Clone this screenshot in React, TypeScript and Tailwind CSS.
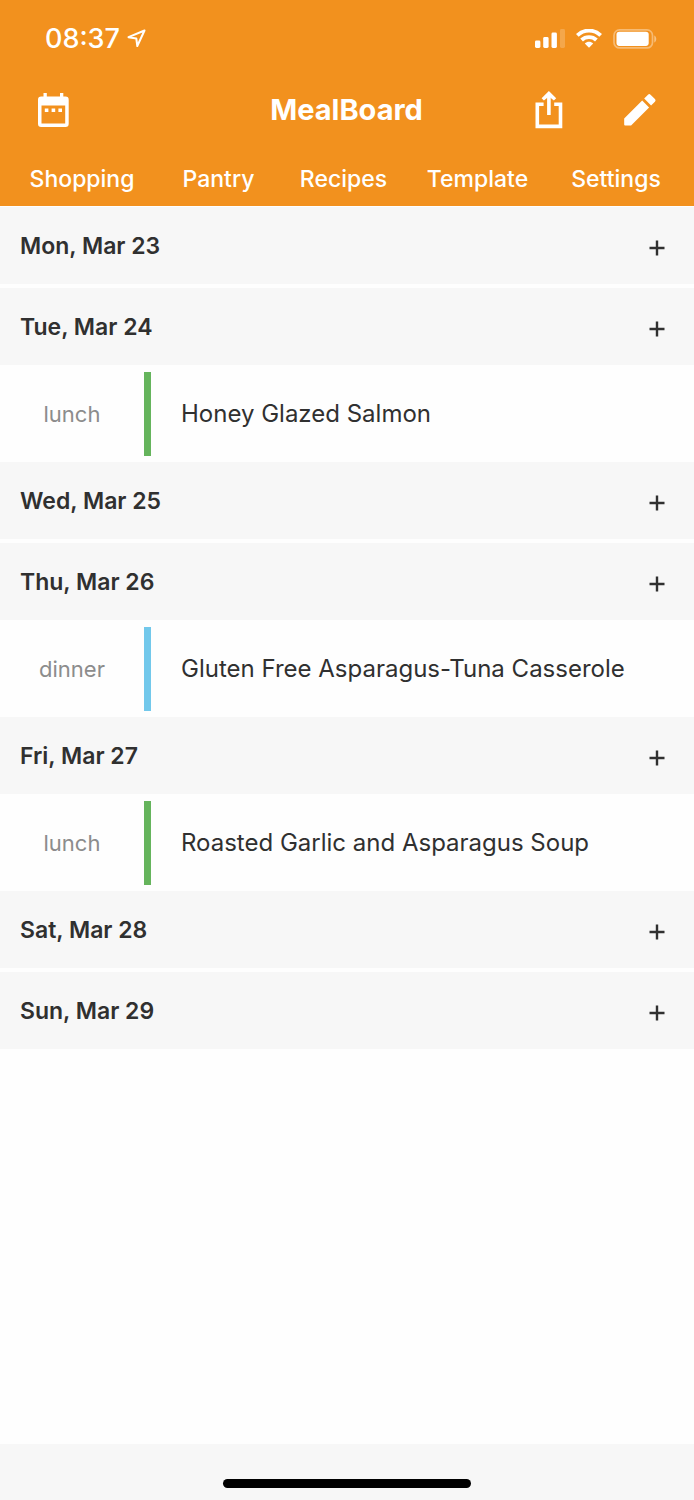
type Meal = { slot: 'lunch' | 'dinner'; name: string };
type Day = { label: string; meals: Meal[] };

const days: Day[] = [
  { label: 'Mon, Mar 23', meals: [] },
  { label: 'Tue, Mar 24', meals: [{ slot: 'lunch', name: 'Honey Glazed Salmon' }] },
  { label: 'Wed, Mar 25', meals: [] },
  { label: 'Thu, Mar 26', meals: [{ slot: 'dinner', name: 'Gluten Free Asparagus-Tuna Casserole' }] },
  { label: 'Fri, Mar 27', meals: [{ slot: 'lunch', name: 'Roasted Garlic and Asparagus Soup' }] },
  { label: 'Sat, Mar 28', meals: [] },
  { label: 'Sun, Mar 29', meals: [] },
];

const tabs = ['Shopping', 'Pantry', 'Recipes', 'Template', 'Settings'];

const slotColor = { lunch: 'bg-[#65b45c]', dinner: 'bg-[#72c8eb]' };

function StatusBar() {
  return (
    <div className="flex h-[75px] items-center justify-between pt-[2px] pr-[37px] pl-[45px]">
      <div className="flex items-center gap-[7px]">
        <span className="text-[27px] leading-8 font-medium">08:37</span>
        <svg className="h-5 w-5" viewBox="0 0 20 20" fill="none" stroke="currentColor" strokeWidth="2" strokeLinejoin="round" aria-hidden="true">
          <path d="M17.500 1.500 1.500 8.200 9.300 9.500 10.300 17Z" />
        </svg>
      </div>
      <div className="flex items-center gap-[11px]">
        <svg className="h-5 w-[30px]" viewBox="0 0 30 20" fill="currentColor" aria-hidden="true">
          <rect x="0" y="11.5" width="5.4" height="7.5" rx="1.4" />
          <rect x="8.2" y="8" width="5.4" height="11" rx="1.4" />
          <rect x="16.5" y="3.5" width="5.4" height="15.5" rx="1.4" />
          <rect x="25" y="0" width="5" height="19" rx="1.4" opacity="0.2" />
        </svg>
        <svg className="h-5 w-[26px]" viewBox="0 0 26 20" fill="none" stroke="currentColor" strokeWidth="3.9" aria-hidden="true">
          <path d="M1.300 6.400C7.800 0 18.200 0 24.700 6.400" />
          <path d="M5.600 11C9.700 7.100 16.300 7.100 20.400 11" />
          <path d="M8.800 14.500C11.200 12.200 14.800 12.200 17.200 14.500L13 18.700Z" fill="currentColor" stroke="none" />
        </svg>
        <svg className="h-5 w-11" viewBox="0 0 44 20" aria-hidden="true">
          <rect x="1" y="0.9" width="38.5" height="18" rx="5.5" fill="none" stroke="currentColor" strokeWidth="1.7" opacity="0.38" />
          <rect x="3.5" y="2.7" width="32.2" height="14.2" rx="2.8" fill="currentColor" />
          <path d="M41.300 6.400v7c2.600-1.200 2.600-5.800 0-7Z" fill="currentColor" opacity="0.45" />
        </svg>
      </div>
    </div>
  );
}

function TitleBar() {
  return (
    <div className="grid h-[70px] grid-cols-[1fr_auto_1fr] items-center pr-[38px] pl-[37px]">
      <button type="button" aria-label="Calendar" className="justify-self-start">
        <svg className="h-[34px] w-8" viewBox="0 0 32 34" fill="currentColor" aria-hidden="true">
          <path
            fillRule="evenodd"
            d="M6.500 0h3.300v3.600h13.200V0h3.300v3.600h2.200A3.200 3.200 0 0 1 31.700 6.800v24A3.200 3.200 0 0 1 28.500 34H4.200A3.200 3.200 0 0 1 1 30.800v-24A3.200 3.200 0 0 1 4.200 3.600H6.500ZM4.500 12.400v18.100h23.700V12.400Z"
          />
          <path d="M7.800 15.500h3.600v3.600H7.800zM14.600 15.500h3.600v3.600h-3.600zM21.400 15.500h3.600v3.600h-3.600z" />
        </svg>
      </button>
      <h1 className="text-[29px] leading-9 font-bold">MealBoard</h1>
      <div className="flex items-center gap-[57px] justify-self-end">
        <button type="button" aria-label="Share">
          <svg className="h-[38px] w-7" viewBox="0 0 28 38" fill="none" stroke="currentColor" strokeWidth="3.6" aria-hidden="true">
            <path d="M8.600 13.200H2.300v22.200h23.200V13.200h-6.300" />
            <path d="M13.900 24V4" />
            <path d="M13.900 0 21.200 7.300 18.900 9.600 13.900 5.600 8.900 9.600 6.600 7.300Z" fill="currentColor" stroke="none" />
          </svg>
        </button>
        <button type="button" aria-label="Edit">
          <svg className="h-10 w-9" viewBox="2.2 2 19.8 22" fill="currentColor" aria-hidden="true">
            <path d="M4.500 17.700V21q0 .5.500.5h3.300L18.200 11.600 14.400 7.800ZM21.400 8.400a1 1 0 0 0 0-1.400L19 4.600a1 1 0 0 0-1.400 0L15.500 6.700l3.800 3.800Z" />
          </svg>
        </button>
      </div>
    </div>
  );
}

function DaySection({ day }: { day: Day }) {
  return (
    <section>
      <div className="flex h-[77px] items-center justify-between bg-[#f7f7f7] pr-[29px] pl-5">
        <h2 className="text-[23px] leading-8 font-semibold">{day.label}</h2>
        <button type="button" aria-label={`Add meal on ${day.label}`} className="pt-1">
          <svg className="h-4 w-4" viewBox="0 0 16 16" stroke="currentColor" strokeWidth="2.4" aria-hidden="true">
            <path d="M8 .5v15M.5 8h15" />
          </svg>
        </button>
      </div>
      {day.meals.map((meal) => (
        <div key={meal.name} className="flex h-[97px] items-center">
          <span className="w-36 shrink-0 text-center text-[22px] leading-8 text-[#8c8c8c]">{meal.slot}</span>
          <span className={`h-[84px] w-[7px] shrink-0 ${slotColor[meal.slot]}`} />
          <a href="#meal" className="pl-[30px] text-[24px] leading-8">{meal.name}</a>
        </div>
      ))}
    </section>
  );
}

export default function App() {
  return (
    <div className="flex min-h-screen flex-col bg-[#fefefe] font-['Inter',sans-serif] text-[#303030]">
      <header className="bg-[#f2911e] text-white">
        <StatusBar />
        <TitleBar />
        <nav className="grid h-[61px] grid-cols-[154fr_119fr_131fr_137fr_140fr] items-start pt-[18px] pr-2 pl-[5px] text-center text-[23px] leading-8 font-medium">
          {tabs.map((tab) => (
            <a key={tab} href={`#${tab.toLowerCase()}`}>{tab}</a>
          ))}
        </nav>
      </header>
      <main className="flex-1 pt-px">
        {days.map((day, i) => (
          <div key={day.label} className={i > 0 && days[i - 1].meals.length === 0 ? 'pt-1' : ''}>
            <DaySection day={day} />
          </div>
        ))}
      </main>
      <footer className="flex h-14 items-end justify-center bg-[#f7f7f7] pb-3">
        <div className="h-[9px] w-[248px] rounded-full bg-black" />
      </footer>
    </div>
  );
}
